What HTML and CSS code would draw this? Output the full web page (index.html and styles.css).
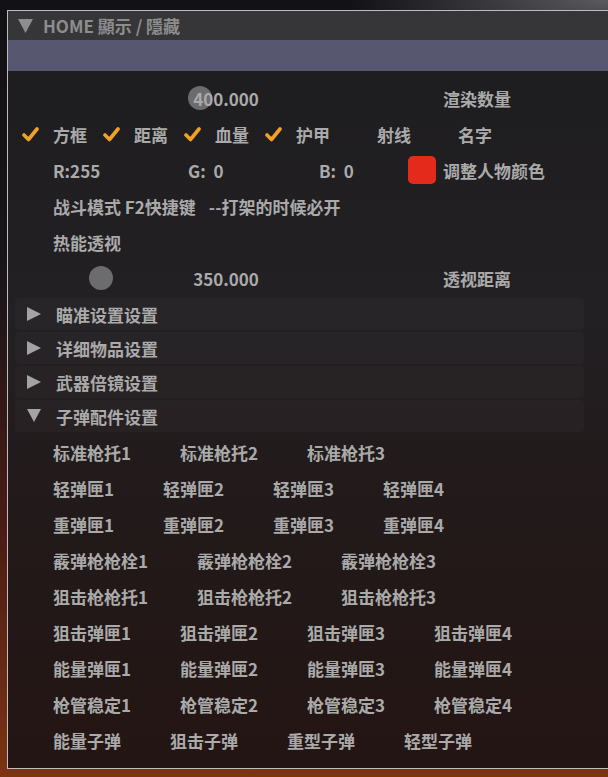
FILE: index.html
```html
<!DOCTYPE html>
<html lang="zh">
<head>
    <meta charset="UTF-8">
    <meta name="viewport" content="width=device-width, initial-scale=1.0">
    <title>HOME 顯示 / 隱藏</title>
    <link rel="stylesheet" href="styles.css">
</head>
<body>
    <div class="window">
        <div class="titlebar">
            <svg class="title-arrow" width="15" height="14" viewBox="0 0 15 14"><polygon points="0,0 15,0 7.5,14"/></svg>
            <span>HOME 顯示 / 隱藏</span>
        </div>
        <div class="band"></div>

        <div class="content">
            <!-- render count -->
            <div class="row">
                <div class="slider">
                    <span class="knob" style="left: 166px"></span>
                    <span class="value">400.000</span>
                </div>
                <span class="side-label">渲染数量</span>
            </div>

            <div class="row checks">
                <div class="check"><span class="box"><svg width="17" height="17" viewBox="0 0 17 17"><polyline points="2,9 6.5,13.5 15,3"/></svg></span>方框</div>
                <div class="check"><span class="box"><svg width="17" height="17" viewBox="0 0 17 17"><polyline points="2,9 6.5,13.5 15,3"/></svg></span>距离</div>
                <div class="check"><span class="box"><svg width="17" height="17" viewBox="0 0 17 17"><polyline points="2,9 6.5,13.5 15,3"/></svg></span>血量</div>
                <div class="check"><span class="box"><svg width="17" height="17" viewBox="0 0 17 17"><polyline points="2,9 6.5,13.5 15,3"/></svg></span>护甲</div>
                <div class="check"><span class="box"></span>射线</div>
                <div class="check"><span class="box"></span>名字</div>
            </div>

            <div class="row color">
                <span class="field f-r">R:255</span>
                <span class="field f-g">G:&nbsp; 0</span>
                <span class="field f-b">B:&nbsp; 0</span>
                <span class="swatch"></span>
                <span>调整人物颜色</span>
            </div>

            <div class="row text">战斗模式 F2快捷键<span class="note">--打架的时候必开</span></div>
            <div class="row text">热能透视</div>

            <!-- see-through distance -->
            <div class="row">
                <div class="slider">
                    <span class="knob" style="left: 67px"></span>
                    <span class="value">350.000</span>
                </div>
                <span class="side-label">透视距离</span>
            </div>

            <div class="node">
                <svg class="arrow" width="14" height="14" viewBox="0 0 14 14"><polygon points="0,0 14,7 0,14"/></svg>
                瞄准设置设置
            </div>
            <div class="node">
                <svg class="arrow" width="14" height="14" viewBox="0 0 14 14"><polygon points="0,0 14,7 0,14"/></svg>
                详细物品设置
            </div>
            <div class="node">
                <svg class="arrow" width="14" height="14" viewBox="0 0 14 14"><polygon points="0,0 14,7 0,14"/></svg>
                武器倍镜设置
            </div>
            <div class="node">
                <svg class="arrow" width="14" height="14" viewBox="0 0 14 14"><polygon points="0,0 14,0 7,13"/></svg>
                子弹配件设置
            </div>

            <!-- attachments -->
            <div class="row items"><span>标准枪托1</span><span>标准枪托2</span><span>标准枪托3</span></div>
            <div class="row items"><span>轻弹匣1</span><span>轻弹匣2</span><span>轻弹匣3</span><span>轻弹匣4</span></div>
            <div class="row items"><span>重弹匣1</span><span>重弹匣2</span><span>重弹匣3</span><span>重弹匣4</span></div>
            <div class="row items"><span>霰弹枪枪栓1</span><span>霰弹枪枪栓2</span><span>霰弹枪枪栓3</span></div>
            <div class="row items"><span>狙击枪枪托1</span><span>狙击枪枪托2</span><span>狙击枪枪托3</span></div>
            <div class="row items"><span>狙击弹匣1</span><span>狙击弹匣2</span><span>狙击弹匣3</span><span>狙击弹匣4</span></div>
            <div class="row items"><span>能量弹匣1</span><span>能量弹匣2</span><span>能量弹匣3</span><span>能量弹匣4</span></div>
            <div class="row items"><span>枪管稳定1</span><span>枪管稳定2</span><span>枪管稳定3</span><span>枪管稳定4</span></div>
            <div class="row items"><span>能量子弹</span><span>狙击子弹</span><span>重型子弹</span><span>轻型子弹</span></div>
        </div>
    </div>
</body>
</html>
```

FILE: styles.css
```css
body {
    margin: 0;
    width: 608px;
    height: 777px;
    overflow: hidden;
    font-family: "Noto Sans CJK SC", "Noto Sans CJK TC", "Noto Sans", sans-serif;
    font-weight: 700;
    font-size: 17px;
    line-height: 1;
    color: #aaaaaa;
    background:
        radial-gradient(ellipse 260px 60px at 100% 0%, #5b5b5f 0%, rgba(91, 91, 95, 0) 100%),
        linear-gradient(to bottom, #121115 0%, #19151a 35%, #4a1c14 68%, #7c3413 100%);
}
.window {
    margin: 10px 0 0 7px;
    width: 601px;
    height: 759px;
    box-sizing: border-box;
    border: 1px solid #bdbdbd;
    border-right: none;
    background: linear-gradient(to bottom, #1d1c1f 0%, #222023 40%, #221a1b 62%, #231513 100%);
}
.titlebar {
    height: 29px;
    display: flex;
    align-items: center;
    padding-left: 10px;
    background: #363538;
    color: #8d8d8d;
}
.title-arrow {
    fill: #8d8d8d;
    margin-right: 10px;
}
.band {
    height: 31px;
    background: #57576f;
}
.content {
    padding: 9px 0 0 14px;
}
.row {
    height: 36px;
    display: flex;
    align-items: center;
}
.slider {
    position: relative;
    width: 408px;
    height: 24px;
    display: flex;
    align-items: center;
    justify-content: center;
}
.knob {
    position: absolute;
    top: 0;
    width: 24px;
    height: 24px;
    border-radius: 50%;
    background: #6c6b6e;
}
.value {
    position: relative;
}
.side-label {
    margin-left: 13px;
}
.checks {
    gap: 16px;
}
.check {
    display: flex;
    align-items: center;
}
.box {
    width: 24px;
    height: 24px;
    margin-right: 7px;
    display: flex;
    align-items: center;
}
.box polyline {
    fill: none;
    stroke: #f0a226;
    stroke-width: 3.6;
    stroke-linecap: round;
    stroke-linejoin: round;
}
.color {
    padding-left: 31px;
}
.f-r {
    width: 135px;
}
.f-g {
    width: 131px;
}
.f-b {
    width: 89px;
}
.swatch {
    width: 28px;
    height: 28px;
    border-radius: 5px;
    background: #e32a1b;
    margin-right: 7px;
}
.text {
    padding-left: 31px;
}
.note {
    margin-left: 13px;
}
.node {
    height: 32px;
    width: 557px;
    margin: 2px 0 2px -7px;
    padding-left: 12px;
    display: flex;
    align-items: center;
    border-radius: 4px;
    background: rgba(255, 255, 255, 0.025);
}
.arrow {
    fill: #a3a3a3;
    margin-right: 15px;
}
.items {
    padding-left: 31px;
    gap: 49px;
}
```
